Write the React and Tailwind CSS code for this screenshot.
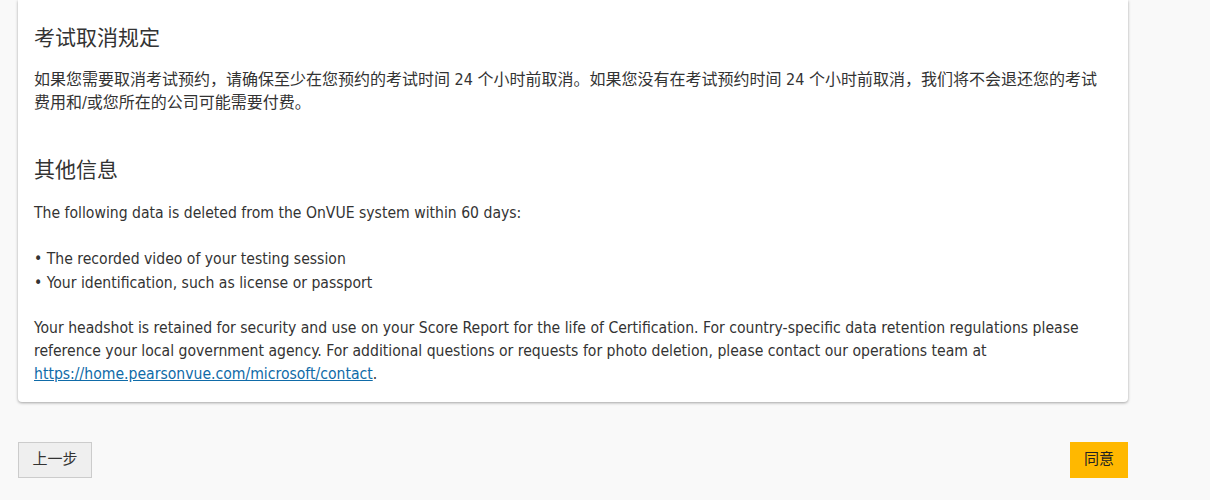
export default function App() {
  const font = {
    fontFamily: '"DejaVu Sans Condensed", "DejaVu Sans", "Noto Sans CJK SC", sans-serif',
  };
  return (
    <div className="min-h-[500px] bg-[#f9f9f9] text-[#333] text-[16px] leading-[23px]" style={font}>
      <div className="w-[1110px] ml-[18px] bg-white rounded-b-[4px] shadow-[0_1px_3px_rgba(0,0,0,0.35)] px-4 pt-[22px] pb-[15px]">
        <h2 className="text-[21px] leading-[32px] font-normal mb-[14px]">考试取消规定</h2>
        <p>
          如果您需要取消考试预约，请确保至少在您预约的考试时间 24 个小时前取消。如果您没有在考试预约时间 24 个小时前取消，我们将不会退还您的考试费用和/或您所在的公司可能需要付费。
        </p>

        <h2 className="text-[21px] leading-[32px] font-normal mt-[40px] mb-[16px]">其他信息</h2>
        <div className="text-[15.6px] leading-[23.3px]">
          <p>The following data is deleted from the OnVUE system within 60 days:</p>
          <p className="mt-[23px]">• The recorded video of your testing session</p>
          <p>• Your identification, such as license or passport</p>
          <p className="mt-[22px]">
            Your headshot is retained for security and use on your Score Report for the life of Certification. For country-specific data retention regulations please reference your local government agency. For additional questions or requests for photo deletion, please contact our operations team at{" "}
            <a href="#" className="text-[#0f6ba8] underline">https://home.pearsonvue.com/microsoft/contact</a>.
          </p>
        </div>
      </div>

      <div className="w-[1110px] ml-[18px] mt-[40px] flex justify-between">
        <button className="h-[36px] px-[13.5px] bg-[#efefef] border border-[#ccc] text-[#333] text-[15px]">上一步</button>
        <button className="h-[36px] px-[14px] bg-[#ffb800] text-[#222] text-[15px]">同意</button>
      </div>
    </div>
  );
}
